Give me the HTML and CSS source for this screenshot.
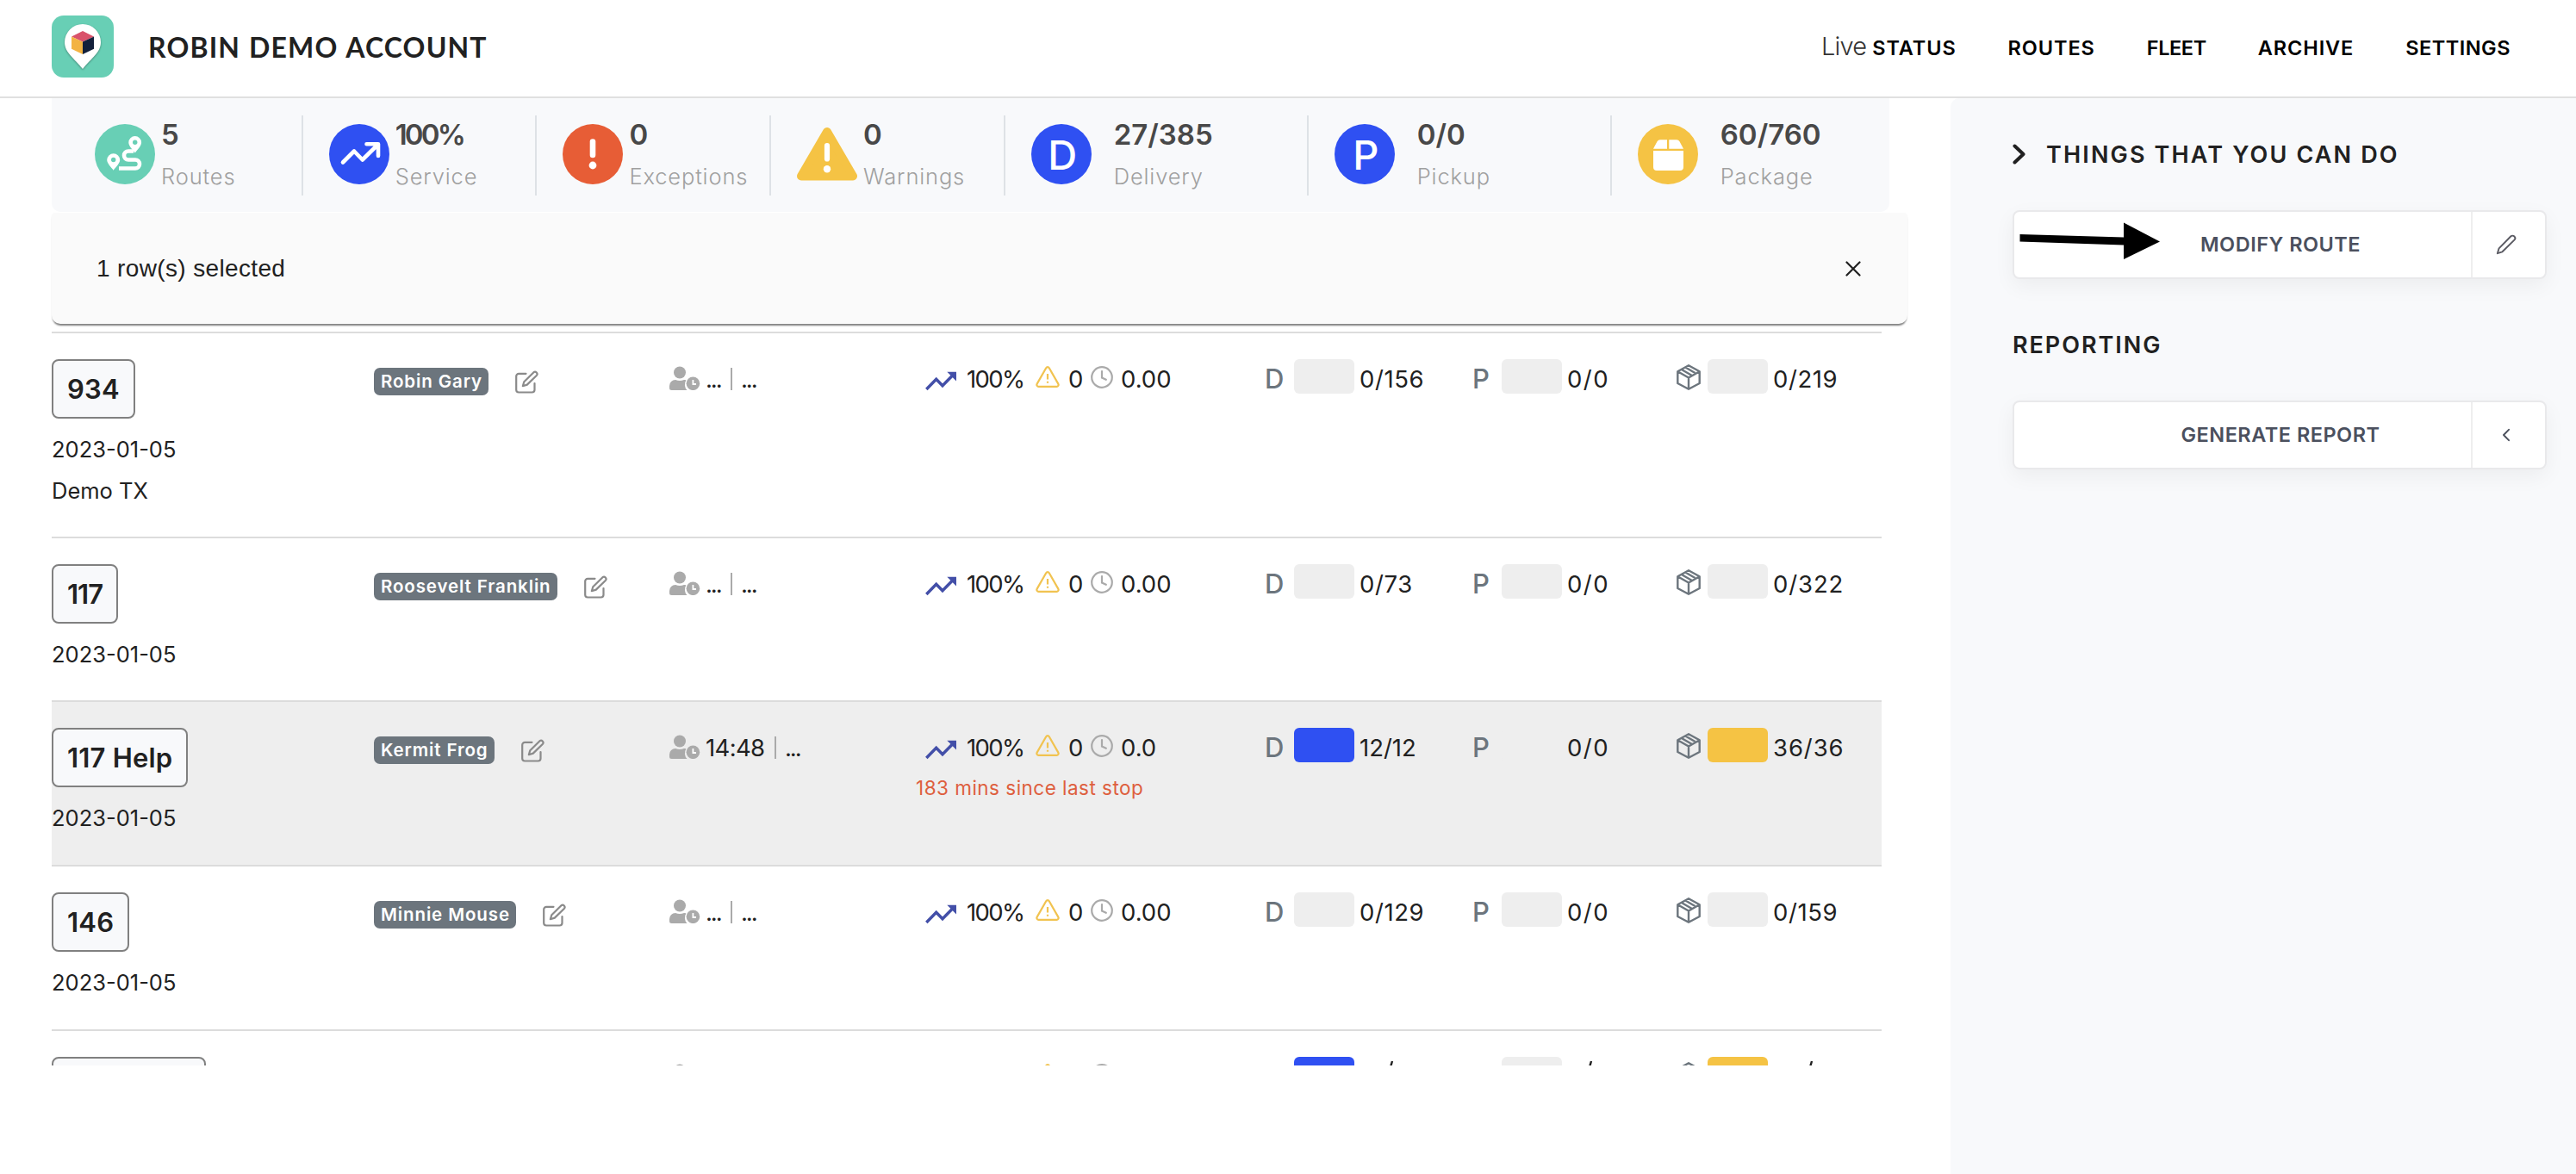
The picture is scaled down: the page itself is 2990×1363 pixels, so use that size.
FILE: index.html
```
<!DOCTYPE html>
<html lang="en">
<head>
<meta charset="utf-8">
<title>Robin Demo Account</title>
<link rel="stylesheet" href="styles.css">
</head>
<body>
<svg class="defs" width="0" height="0">
  <symbol id="i-edit" viewBox="0 0 27 27"><g fill="none" stroke="#8a8a8a" stroke-width="2.200" stroke-linecap="round" stroke-linejoin="round"><path d="M12.500 3.800H4.200a3 3 0 0 0-3 3V22.500a3 3 0 0 0 3 3H19.500a3 3 0 0 0 3-3V15"/><path d="M21.500 2.200a2.500 2.500 0 0 1 3.500 3.500L13.800 16.600 8.800 18.200 10.300 13.200z"/></g></symbol>
  <symbol id="i-user" viewBox="0 0 36 28"><circle cx="12" cy="7.500" r="7" fill="#aaa"/><path fill="#aaa" d="M0 25.500v-2.500a7 7 0 0 1 7-7c3.500 1.300 6.500 1.300 10 0 .8 0 1.600.1 2.300.4a9.500 9.500 0 0 0 1.200 11.600H2.500A2.500 2.500 0 0 1 0 25.500z"/><circle cx="27.400" cy="20.300" r="7.800" fill="#aaa"/><path d="M27.400 16v5h3.600" fill="none" stroke="#fff" stroke-width="1.800"/></symbol>
  <symbol id="i-trend" viewBox="0 0 36 23"><path d="M1.300 21 12.700 9.200 20 16.800 32 4.500" fill="none" stroke="#434fa8" stroke-width="3.400"/><path d="M25.300.8H36v10.700z" fill="#434fa8"/></symbol>
  <symbol id="i-warn" viewBox="0 0 28 25"><path d="M12.200 2.200a2.100 2.100 0 0 1 3.600 0L26.300 20.600a2.100 2.100 0 0 1-1.800 3.200H3.500a2.100 2.100 0 0 1-1.800-3.200z" fill="none" stroke="#f1c350" stroke-width="2.200"/><path d="M14 9v6.500M14 17.800v2" stroke="#f1c350" stroke-width="2.200"/></symbol>
  <symbol id="i-clock" viewBox="0 0 26 26"><circle cx="13" cy="13" r="11.800" fill="none" stroke="#aaa" stroke-width="2.200"/><path d="M13 6v7.500l4.800 2.300" fill="none" stroke="#aaa" stroke-width="2.200" stroke-linecap="round"/></symbol>
  <symbol id="i-pack" viewBox="0 0 28 30"><g fill="none" stroke="#6c757d" stroke-width="2.400" stroke-linejoin="round"><path d="M14 1.300 26.700 8.200V22L14 28.700 1.300 22V8.200zM1.300 8.200 14 15.500 26.700 8.200M14 15.500V28.700M10.300 3.500 21.500 10M5.800 6 17.500 12.700"/></g></symbol>
</svg>

<header class="header">
  <div class="brand">
    <svg class="logo" viewBox="0 0 72 72"><rect width="72" height="72" rx="14" fill="#68cfb5"/><path class="pin" d="M36 10a21 21 0 0 0-21 21c0 12 11 18.500 21 31 10-12.500 21-19 21-31a21 21 0 0 0-21-21z" fill="#fff"/><path d="M36 18 49 24.500 36 30.500 23 24.500z" fill="#d9526b"/><path d="M23 24.500 36 30.500V45L23 38.700z" fill="#f3b343"/><path d="M49 24.500 36 30.500V45l13-6.300z" fill="#13203b"/></svg>
    <h1 class="brand-name">ROBIN DEMO ACCOUNT</h1>
  </div>
  <nav class="nav">
    <span class="nav-item"><span class="live">Live</span><b>STATUS</b></span>
    <b>ROUTES</b><b class="tight">FLEET</b><b>ARCHIVE</b><b class="last-item">SETTINGS</b>
  </nav>
</header>

<div class="layout">
<main class="main">
  <section class="summary">
    <div class="stat"><svg class="stat-icon" viewBox="0 0 70 70"><circle cx="35" cy="35" r="35" fill="#68cfb5"/><path d="M45 31.500H39a5 5 0 0 0 0 10h8a5 5 0 0 1 0 10H28" fill="none" stroke="#fff" stroke-width="4.600"/><path d="M46.700 14a7.400 7.400 0 0 1 7.400 7.400c0 4-4.900 8.600-7.400 12-2.500-3.400-7.400-8-7.400-12a7.400 7.400 0 0 1 7.400-7.400zM21.700 34.300a7.500 7.500 0 0 1 7.500 7.500c0 4-5 8.400-7.500 12-2.500-3.600-7.500-8-7.500-12a7.500 7.500 0 0 1 7.500-7.500z" fill="#fff"/><circle cx="46.700" cy="21.300" r="2.700" fill="#68cfb5"/><circle cx="21.700" cy="41.500" r="2.700" fill="#68cfb5"/></svg><div class="stat-text"><strong>5</strong><span>Routes</span></div></div>
    <div class="stat"><svg class="stat-icon" viewBox="0 0 70 70"><circle cx="35" cy="35" r="35" fill="#2f50f2"/><path d="M16 44.500 29 31.500 38.700 41.500 56.500 24M43.500 23.300H57V37" fill="none" stroke="#fff" stroke-width="4.600" stroke-linecap="round" stroke-linejoin="round"/></svg><div class="stat-text"><strong class="pct">100%</strong><span>Service</span></div></div>
    <div class="stat"><svg class="stat-icon" viewBox="0 0 70 70"><circle cx="35" cy="35" r="35" fill="#e75d36"/><path d="M35 20.500V36" stroke="#fff" stroke-width="6.600" stroke-linecap="round"/><circle cx="35" cy="48" r="4.400" fill="#fff"/></svg><div class="stat-text"><strong>0</strong><span>Exceptions</span></div></div>
    <div class="stat"><svg class="stat-icon" viewBox="0 0 70 70"><path d="M35 9 65 60.500H5z" fill="#f5c344" stroke="#f5c344" stroke-width="10" stroke-linejoin="round"/><path d="M35 25V40.500" stroke="#fff" stroke-width="6.200" stroke-linecap="round"/><circle cx="35" cy="52.200" r="4.200" fill="#fff"/></svg><div class="stat-text"><strong>0</strong><span>Warnings</span></div></div>
    <div class="stat wide"><div class="stat-icon letter">D</div><div class="stat-text"><strong>27/385</strong><span>Delivery</span></div></div>
    <div class="stat wide"><div class="stat-icon letter">P</div><div class="stat-text"><strong>0/0</strong><span>Pickup</span></div></div>
    <div class="stat wide"><svg class="stat-icon" viewBox="0 0 70 70"><circle cx="35" cy="35" r="35" fill="#f5c344"/><path d="M34 18.300H26a4 4 0 0 0-3.500 2L18 28.700H34zM36.300 18.300H45a4 4 0 0 1 3.500 2L53 28.700H36.300zM18 31H53V50a4 4 0 0 1-4 4H22a4 4 0 0 1-4-4z" fill="#fff"/></svg><div class="stat-text"><strong>60/760</strong><span>Package</span></div></div>
  </section>

  <section class="selection">
    <span>1 row(s) selected</span>
    <svg width="18" height="18" viewBox="0 0 18 18"><path d="M1.500 1.500 16.500 16.500M16.500 1.500 1.500 16.500" stroke="#212121" stroke-width="2.200" stroke-linecap="round"/></svg>
  </section>

  <section class="routes">
    <article class="row tall">
      <div class="name"><span class="code">934</span><p>2023-01-05</p><p>Demo TX</p></div>
      <div class="driver"><span class="badge">Robin Gary</span><svg class="edit"><use href="#i-edit"/></svg></div>
      <div class="time"><svg class="user"><use href="#i-user"/></svg><span class="dots">...</span><i></i><span class="dots">...</span></div>
      <div class="metrics"><div class="line"><svg class="trend"><use href="#i-trend"/></svg><span class="pct-sm">100%</span><svg class="warn"><use href="#i-warn"/></svg><span class="zero">0</span><svg class="clock"><use href="#i-clock"/></svg><span>0.00</span></div></div>
      <div class="count"><span class="mark">D</span><span class="bar"></span><span>0/156</span></div>
      <div class="count"><span class="mark">P</span><span class="bar"></span><span class="loose">0/0</span></div>
      <div class="count"><svg class="pack"><use href="#i-pack"/></svg><span class="bar"></span><span>0/219</span></div>
    </article>
    <article class="row short">
      <div class="name"><span class="code ones">117</span><p>2023-01-05</p></div>
      <div class="driver"><span class="badge">Roosevelt Franklin</span><svg class="edit"><use href="#i-edit"/></svg></div>
      <div class="time"><svg class="user"><use href="#i-user"/></svg><span class="dots">...</span><i></i><span class="dots">...</span></div>
      <div class="metrics"><div class="line"><svg class="trend"><use href="#i-trend"/></svg><span class="pct-sm">100%</span><svg class="warn"><use href="#i-warn"/></svg><span class="zero">0</span><svg class="clock"><use href="#i-clock"/></svg><span>0.00</span></div></div>
      <div class="count"><span class="mark">D</span><span class="bar"></span><span>0/73</span></div>
      <div class="count"><span class="mark">P</span><span class="bar"></span><span class="loose">0/0</span></div>
      <div class="count"><svg class="pack"><use href="#i-pack"/></svg><span class="bar"></span><span class="wider">0/322</span></div>
    </article>
    <article class="row selected">
      <div class="name"><span class="code">117 Help</span><p>2023-01-05</p></div>
      <div class="driver"><span class="badge">Kermit Frog</span><svg class="edit"><use href="#i-edit"/></svg></div>
      <div class="time"><svg class="user"><use href="#i-user"/></svg><span class="clocked">14:48</span><i></i><span class="dots">...</span></div>
      <div class="metrics"><div class="line"><svg class="trend"><use href="#i-trend"/></svg><span class="pct-sm">100%</span><svg class="warn"><use href="#i-warn"/></svg><span class="zero">0</span><svg class="clock"><use href="#i-clock"/></svg><span>0.0</span></div><p class="alert">183 mins since last stop</p></div>
      <div class="count"><span class="mark">D</span><span class="bar blue"></span><span class="even">12/12</span></div>
      <div class="count"><span class="mark">P</span><span class="bar"></span><span class="loose">0/0</span></div>
      <div class="count"><svg class="pack"><use href="#i-pack"/></svg><span class="bar yellow"></span><span class="wider">36/36</span></div>
    </article>
    <article class="row">
      <div class="name"><span class="code">146</span><p>2023-01-05</p></div>
      <div class="driver"><span class="badge">Minnie Mouse</span><svg class="edit"><use href="#i-edit"/></svg></div>
      <div class="time"><svg class="user"><use href="#i-user"/></svg><span class="dots">...</span><i></i><span class="dots">...</span></div>
      <div class="metrics"><div class="line"><svg class="trend"><use href="#i-trend"/></svg><span class="pct-sm">100%</span><svg class="warn"><use href="#i-warn"/></svg><span class="zero">0</span><svg class="clock"><use href="#i-clock"/></svg><span>0.00</span></div></div>
      <div class="count"><span class="mark">D</span><span class="bar"></span><span>0/129</span></div>
      <div class="count"><span class="mark">P</span><span class="bar"></span><span class="loose">0/0</span></div>
      <div class="count"><svg class="pack"><use href="#i-pack"/></svg><span class="bar"></span><span>0/159</span></div>
    </article>
    <article class="row">
      <div class="name"><span class="code last"></span></div>
      <div class="driver"></div>
      <div class="time"><svg class="user"><use href="#i-user"/></svg></div>
      <div class="metrics"><div class="line"><svg class="trend"><use href="#i-trend"/></svg><span class="pct-sm"></span><svg class="warn"><use href="#i-warn"/></svg><span class="zero"></span><svg class="clock"><use href="#i-clock"/></svg></div></div>
      <div class="count"><span class="mark"></span><span class="bar blue"></span><svg class="slash" viewBox="0 0 50 30"><path d="M38 5 31 29" stroke="#212121" stroke-width="2.400"/></svg></div>
      <div class="count"><span class="mark"></span><span class="bar"></span><svg class="slash" viewBox="0 0 50 30"><path d="M28 5 21 29" stroke="#212121" stroke-width="2.400"/></svg></div>
      <div class="count"><svg class="pack"><use href="#i-pack"/></svg><span class="bar yellow"></span><svg class="slash" viewBox="0 0 50 30"><path d="M45 5 38 29" stroke="#212121" stroke-width="2.400"/></svg></div>
    </article>
  </section>
</main>

<aside class="side">
  <h2><svg width="16" height="24" viewBox="0 0 16 24"><path d="M2.500 2.500 12.500 12 2.500 21.500" fill="none" stroke="#212121" stroke-width="4" stroke-linecap="round" stroke-linejoin="round"/></svg>THINGS THAT YOU CAN DO</h2>
  <button class="action"><span>MODIFY ROUTE</span><em><svg width="24" height="24" viewBox="0 0 24 24"><path d="M17.200 2.500a2.800 2.800 0 0 1 4.200 4.200L7.500 20.300 1.800 22.200 3.600 16.300z" fill="none" stroke="#5a5a62" stroke-width="1.900" stroke-linejoin="round"/></svg></em>
    <svg class="arrow" viewBox="0 0 164 44"><path d="M.500 14 121 17.500V.500L163 22.500 121 43V26.500L.500 22.500z" fill="#000"/></svg></button>
  <h2 class="plain">REPORTING</h2>
  <button class="action"><span>GENERATE REPORT</span><em><svg width="10" height="16" viewBox="0 0 10 16"><path d="M8 1.800 2 8 8 14.200" fill="none" stroke="#4a4f5c" stroke-width="1.900" stroke-linecap="round" stroke-linejoin="round"/></svg></em></button>
</aside>
</div>
</body>
</html>
```
FILE: styles.css
```
* { box-sizing: border-box; }
body { margin: 0; background: #fff; color: #212121; font-family: Inter, "Liberation Sans", sans-serif; height: 1363px; overflow: hidden; }
p, h1, h2 { margin: 0; }
svg { display: block; flex: none; }
.defs { display: none; }

.header { display: flex; justify-content: space-between; height: 114px; padding: 0 76px 0 60px; border-bottom: 2px solid #e0e0e0; }
.brand { display: flex; align-items: center; gap: 40px; }
.logo { width: 72px; height: 72px; margin-bottom: 4px; }
.pin { filter: drop-shadow(0 1px 1px rgba(0, 0, 0, .35)); }
.brand-name { font: 700 32px/40px Lato, sans-serif; letter-spacing: 1.150px; word-spacing: 1px; margin-bottom: 3px; }
.nav { display: flex; align-items: center; gap: 60px; color: #000; font-size: 23.500px; letter-spacing: .9px; padding-bottom: 1px; }
.nav b { font-weight: 600; }
.nav .tight { letter-spacing: -.4px; }
.nav .last-item { letter-spacing: .5px; }
.nav-item { display: flex; align-items: center; gap: 7px; }
.live { font-size: 29px; font-weight: 300; letter-spacing: -.8px; color: #333; margin-top: -4px; }

.layout { display: flex; justify-content: space-between; height: 1249px; }
.main { width: 2214px; padding-left: 60px; }

.summary { display: flex; width: 2133px; height: 132px; padding: 20px 0 0 20px; background: #f8f9fb; border-radius: 0 0 10px 10px; }
.stat { display: flex; width: 271.700px; height: 93px; padding-left: 30px; gap: 7px; border-right: 2px solid #dee2e6; }
.stat.wide { width: 352px; gap: 26px; }
.stat:last-child { border-right: 0; width: auto; }
.stat-icon { width: 70px; height: 70px; margin-top: 10px; }
.stat-icon.letter { border-radius: 50%; background: #2f50f2; color: #fff; font-size: 47px; font-weight: 450; line-height: 72px; text-align: center; padding-left: 3px; }
.stat-text { display: flex; flex-direction: column; margin-top: -2px; }
.stat-text strong { font-size: 33px; line-height: 48px; font-weight: 600; color: #484848; }
.stat-text .pct { letter-spacing: -2.800px; }
.stat-text span { font-size: 25.500px; line-height: 49px; font-weight: 300; letter-spacing: .85px; color: #a0a0a0; }

.selection { display: flex; align-items: center; justify-content: space-between; width: 2154px; height: 129px; padding: 0 54px 0 52px; margin-top: 1px; background: #fafafa; border-radius: 4px 4px 10px 10px; box-shadow: 0 3px 2px -1px rgba(0, 0, 0, .5); position: relative; font: 28px/40px "Liberation Sans", sans-serif; letter-spacing: .36px; }

.routes { width: 2124px; height: 852px; margin-top: 9px; overflow: hidden; }
.row { display: grid; grid-template-columns: 374px 343px 297px 394px 241px 237px 238px; height: 191px; padding-top: 30px; border-top: 2px solid #dcdcdc; font-size: 27.500px; line-height: 46px; }
.row.tall { height: 238px; }
.row.short { height: 190px; }
.row.selected { background: #eee; }

.name p { font-size: 25.500px; line-height: 48px; }
.code { display: block; width: max-content; height: 69px; padding: 0 16px; margin-bottom: 12px; border: 2px solid #808080; border-radius: 8px; background: #f8f9fb; font-size: 31px; font-weight: 600; line-height: 65px; letter-spacing: .2px; }
.code.ones { letter-spacing: -1px; }
.code.last { width: 179px; }

.driver { display: flex; align-items: flex-start; gap: 31px; padding-top: 10px; }
.badge { height: 32px; padding: 0 7px 0 8px; border-radius: 7px; background: #6c757d; color: #fff; font-size: 20.500px; font-weight: 600; line-height: 32px; letter-spacing: .88px; }
.edit { width: 27px; height: 27px; margin-top: 3px; }

.time { display: flex; align-items: flex-start; }
.user { width: 36px; height: 28px; margin: 8px 6px 0 0; }
.dots { width: 29px; letter-spacing: -2.100px; }
.clocked { width: 80px; letter-spacing: -.660px; }
.time i { width: 2px; height: 26px; margin: 10px 10px 0 0; background: #aaa; }

.line { display: flex; height: 46px; }
.trend { width: 36px; height: 23px; margin: 14px 12px 0 0; }
.pct-sm { width: 80px; letter-spacing: -1.600px; }
.warn { width: 28px; height: 25px; margin: 8px 10px 0 0; }
.zero { width: 26px; }
.clock { width: 26px; height: 26px; margin: 8px 9px 0 0; }
.alert { margin-left: -11px; font-size: 22.500px; line-height: 48px; letter-spacing: .48px; color: #de5f3e; }

.count { display: flex; letter-spacing: .6px; }
.count .mark { width: 34px; font-size: 31px; line-height: 45px; font-weight: 450; color: #6c757d; }
.pack { width: 28px; height: 30px; margin: 6px 8px 0 0; }
.bar { width: 70px; height: 40px; margin-right: 6px; border-radius: 6px; background: #eee; }
.bar.blue { background: #2f50f2; }
.bar.yellow { background: #f5c344; }
.slash { width: 50px; height: 30px; }
.count .loose { letter-spacing: 1.500px; }
.count .wider { letter-spacing: .9px; }
.count .even { letter-spacing: 0; }

.side { width: 726px; padding: 40px 34px 0 72px; background: #f8f9fb; border-radius: 10px 0 0 0; }
.side h2 { display: flex; align-items: center; gap: 23px; height: 50px; font-size: 27px; font-weight: 600; letter-spacing: 2.150px; white-space: nowrap; }
.side .plain { letter-spacing: 1.950px; }
.action { position: relative; display: flex; width: 620px; height: 80px; margin: 40px 0 51px; padding: 0; align-items: stretch; border: 2px solid #e9e9eb; border-radius: 8px; background: #fff; box-shadow: 0 8px 24px rgba(0, 0, 0, .05); color: #4b505e; font: 600 23.500px/76px Inter, sans-serif; letter-spacing: .5px; }
.action span { flex: 1; padding-left: 88px; text-align: center; }
.action em { display: flex; align-items: center; justify-content: center; width: 86px; padding-right: 6px; border-left: 2px solid #eee; }
.arrow { position: absolute; left: 6px; top: 12px; width: 164px; height: 44px; }
```
